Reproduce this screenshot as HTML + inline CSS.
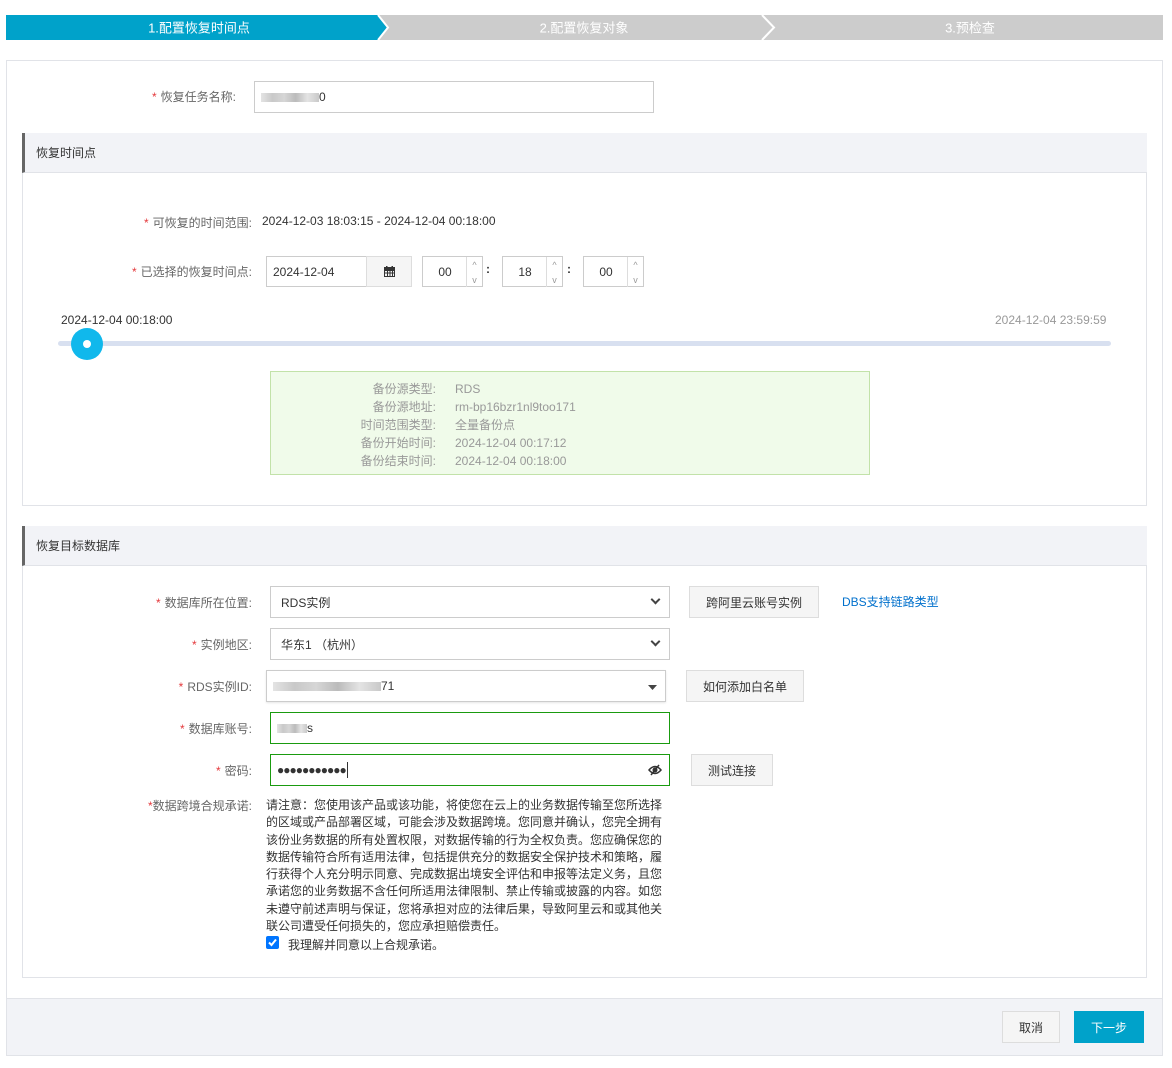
<!DOCTYPE html>
<html><head><meta charset="utf-8"><style>
*{box-sizing:border-box;margin:0;padding:0}
body{width:1172px;height:1068px;background:#fff;font-family:"Liberation Sans","Noto Sans CJK SC",sans-serif;font-size:12px;color:#333;position:relative;overflow:hidden}
.a{position:absolute}
.lbl{position:absolute;text-align:right;color:#666;font-size:12px}
.lbl b{color:#e4393c;font-weight:normal;margin-right:4px}
.inp{position:absolute;border:1px solid #ccc;background:#fff;padding-left:10px;display:flex;align-items:center;font-size:12px;color:#333}
.btn{position:absolute;border:1px solid #ddd;background:#f5f5f5;display:flex;align-items:center;justify-content:center;color:#333;font-size:12px}
.hd{position:absolute;background:#f2f3f7;border-left:3px solid #666;border-bottom:1px solid #e1e3e8;padding-left:11px;display:flex;align-items:center;color:#333}
.sec{position:absolute;border:1px solid #e1e3e8}
.spin{position:absolute;border:1px solid #ccc;background:#fff}
.spin span{position:absolute;left:0;width:44px;top:0;height:30px;display:flex;align-items:center;justify-content:center;color:#333}
.spin i{position:absolute;right:0;width:16px;height:15px;border-left:1px solid #ddd;font-style:normal;color:#999;font-size:9px;display:flex;align-items:center;justify-content:center}
.chev{position:absolute;right:10px;top:50%;margin-top:-6px;width:7px;height:7px;border-right:2px solid #444;border-bottom:2px solid #444;transform:rotate(45deg)}
.blur{display:inline-block;height:9px;background:linear-gradient(90deg,#ddd,#bbb,#ccc,#aaa,#ddd,#bbb);opacity:.8}
</style></head><body>
<!-- steps -->
<svg class="a" style="left:6px;top:15px" width="1157" height="26">
<rect x="0" y="0" width="1157" height="25" fill="#cccccc"/>
<polygon points="0,0 372,0 382,12.5 372,25 0,25" fill="#00a2ca"/>
<polyline points="372,0 382,12.5 372,25" fill="none" stroke="#fff" stroke-width="2"/>
<polyline points="756,0 768,12.5 756,25" fill="none" stroke="#fff" stroke-width="2"/>
<text x="193" y="17.5" fill="#fff" font-size="13" text-anchor="middle" font-family="Liberation Sans,Noto Sans CJK SC,sans-serif">1.配置恢复时间点</text>
<text x="578" y="17.5" fill="#fff" font-size="13" text-anchor="middle" font-family="Liberation Sans,Noto Sans CJK SC,sans-serif">2.配置恢复对象</text>
<text x="964" y="17.5" fill="#fff" font-size="13" text-anchor="middle" font-family="Liberation Sans,Noto Sans CJK SC,sans-serif">3.预检查</text>
</svg>
<!-- main panel -->
<div class="a" style="left:6px;top:60px;width:1157px;height:996px;border:1px solid #e1e3e8"></div>
<div class="a" style="left:7px;top:998px;width:1155px;height:57px;background:#f2f3f7;border-top:1px solid #e1e3e8"></div>
<div class="btn" style="left:1002px;top:1011px;width:58px;height:32px">取消</div>
<div class="a" style="left:1074px;top:1011px;width:70px;height:32px;background:#00a2ca;color:#fff;display:flex;align-items:center;justify-content:center">下一步</div>

<div class="lbl" style="left:100px;top:88px;width:136px"><b>*</b>恢复任务名称:</div>
<div class="inp" style="left:254px;top:81px;width:400px;height:32px;padding-left:6px"><span class="blur" style="width:58px"></span>0</div>

<!-- section 1 -->
<div class="sec" style="left:22px;top:133px;width:1125px;height:373px"></div>
<div class="hd" style="left:22px;top:133px;width:1125px;height:40px">恢复时间点</div>
<div class="lbl" style="left:100px;top:214px;width:152px"><b>*</b>可恢复的时间范围:</div>
<div class="a" style="left:262px;top:214px;color:#333">2024-12-03 18:03:15 - 2024-12-04 00:18:00</div>
<div class="lbl" style="left:100px;top:263px;width:152px"><b>*</b>已选择的恢复时间点:</div>
<div class="inp" style="left:266px;top:256px;width:101px;height:31px;padding-left:6px">2024-12-04</div>
<div class="a" style="left:366px;top:256px;width:46px;height:31px;border:1px solid #ddd;background:#f5f5f5;display:flex;align-items:center;justify-content:center">
<svg width="11" height="11"><rect x="0" y="1" width="11" height="10" fill="#333"/><rect x="1" y="4" width="9" height="6" fill="#f5f5f5"/><g fill="#333"><rect x="1" y="4" width="9" height="1"/><rect x="1" y="6.5" width="9" height="1"/><rect x="3" y="4" width="1" height="6"/><rect x="5.5" y="4" width="1" height="6"/><rect x="8" y="4" width="1" height="6"/></g><rect x="2" y="0" width="1.5" height="2" fill="#333"/><rect x="7.5" y="0" width="1.5" height="2" fill="#333"/></svg></div>
<div class="spin" style="left:422px;top:256px;width:61px;height:31px"><span>00</span><i style="top:0">^</i><i style="top:15px">v</i></div>
<div class="a" style="left:486px;top:262px;font-weight:bold">:</div>
<div class="spin" style="left:502px;top:256px;width:61px;height:31px"><span>18</span><i style="top:0">^</i><i style="top:15px">v</i></div>
<div class="a" style="left:567px;top:262px;font-weight:bold">:</div>
<div class="spin" style="left:583px;top:256px;width:61px;height:31px"><span>00</span><i style="top:0">^</i><i style="top:15px">v</i></div>

<div class="a" style="left:61px;top:313px;color:#333">2024-12-04 00:18:00</div>
<div class="a" style="left:995px;top:313px;color:#999">2024-12-04 23:59:59</div>
<div class="a" style="left:58px;top:341px;width:1053px;height:5px;background:#d8e0f0;border-radius:3px"></div>
<div class="a" style="left:71px;top:328px;width:32px;height:32px;border-radius:50%;background:#10b8ec"></div>
<div class="a" style="left:83px;top:340px;width:8px;height:8px;border-radius:50%;background:#fff"></div>

<div class="a" style="left:270px;top:371px;width:600px;height:104px;background:#f0fbea;border:1px solid #c2e2a9"></div>
<div class="a" style="left:300px;top:380px;width:136px;text-align:right;color:#999;line-height:18px">备份源类型:<br>备份源地址:<br>时间范围类型:<br>备份开始时间:<br>备份结束时间:</div>
<div class="a" style="left:455px;top:380px;color:#999;line-height:18px">RDS<br>rm-bp16bzr1nl9too171<br>全量备份点<br>2024-12-04 00:17:12<br>2024-12-04 00:18:00</div>

<!-- section 2 -->
<div class="sec" style="left:22px;top:526px;width:1125px;height:452px"></div>
<div class="hd" style="left:22px;top:526px;width:1125px;height:40px">恢复目标数据库</div>

<div class="lbl" style="left:100px;top:594px;width:152px"><b>*</b>数据库所在位置:</div>
<div class="inp" style="left:270px;top:586px;width:400px;height:32px">RDS实例<i class="chev"></i></div>
<div class="btn" style="left:689px;top:586px;width:130px;height:32px">跨阿里云账号实例</div>
<div class="a" style="left:842px;top:593px;color:#0070cc">DBS支持链路类型</div>

<div class="lbl" style="left:100px;top:636px;width:152px"><b>*</b>实例地区:</div>
<div class="inp" style="left:270px;top:628px;width:400px;height:32px">华东1 （杭州）<i class="chev"></i></div>

<div class="lbl" style="left:100px;top:678px;width:152px"><b>*</b>RDS实例ID:</div>
<div class="inp" style="left:266px;top:670px;width:400px;height:32px;padding-left:6px;box-shadow:0 1px 2px rgba(0,0,0,.1)"><span class="blur" style="width:108px"></span>71
<svg class="a" style="right:8px;top:14px" width="9" height="5"><polygon points="0,0 9,0 4.5,5" fill="#444"/></svg></div>
<div class="btn" style="left:686px;top:670px;width:118px;height:32px">如何添加白名单</div>

<div class="lbl" style="left:100px;top:720px;width:152px"><b>*</b>数据库账号:</div>
<div class="inp" style="left:270px;top:712px;width:400px;height:32px;border-color:#1a9b0f;padding-left:6px"><span class="blur" style="width:30px"></span>s</div>

<div class="lbl" style="left:100px;top:762px;width:152px"><b>*</b>密码:</div>
<div class="inp" style="left:270px;top:754px;width:400px;height:32px;border-color:#1a9b0f;padding-left:6px;letter-spacing:-1px">●●●●●●●●●●●<span style="display:inline-block;width:1px;height:16px;background:#333;margin-left:1px"></span>
<svg class="a" style="right:7px;top:9px" width="14" height="12"><path d="M1 6 Q7 -1 13 6 Q7 13 1 6Z" fill="none" stroke="#333" stroke-width="1.5"/><circle cx="7" cy="6" r="2.5" fill="#333"/><line x1="3" y1="11" x2="11" y2="1" stroke="#333" stroke-width="1.5"/></svg></div>
<div class="btn" style="left:691px;top:754px;width:82px;height:32px">测试连接</div>

<div class="lbl" style="left:100px;top:797px;width:152px"><b style="margin-right:0">*</b>数据跨境合规承诺:</div>
<div class="a" style="left:266px;top:797px;width:400px;line-height:17.3px;color:#333">请注意：您使用该产品或该功能，将使您在云上的业务数据传输至您所选择的区域或产品部署区域，可能会涉及数据跨境。您同意并确认，您完全拥有该份业务数据的所有处置权限，对数据传输的行为全权负责。您应确保您的数据传输符合所有适用法律，包括提供充分的数据安全保护技术和策略，履行获得个人充分明示同意、完成数据出境安全评估和申报等法定义务，且您承诺您的业务数据不含任何所适用法律限制、禁止传输或披露的内容。如您未遵守前述声明与保证，您将承担对应的法律后果，导致阿里云和或其他关联公司遭受任何损失的，您应承担赔偿责任。</div>
<div class="a" style="left:266px;top:936px;width:13px;height:13px;background:#0075ff;border-radius:2px"><svg width="13" height="13"><polyline points="3,6.5 5.5,9 10,3.5" fill="none" stroke="#fff" stroke-width="2"/></svg></div>
<div class="a" style="left:288px;top:936px">我理解并同意以上合规承诺。</div>
</body></html>
